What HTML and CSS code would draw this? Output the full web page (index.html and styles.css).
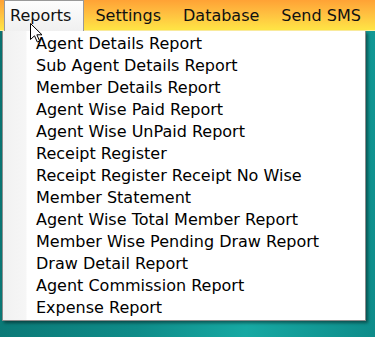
FILE: index.html
```html
<!DOCTYPE html>
<html lang="en">
<head>
  <meta charset="UTF-8">
  <title>Reports Menu</title>
  <meta name="viewport" content="width=device-width, initial-scale=1">
  <link rel="stylesheet" href="styles.css">
</head>
<body>
  <div class="menubar">
    <div class="menu-item open">Reports</div>
    <div class="menu-item">Settings</div>
    <div class="menu-item">Database</div>
    <div class="menu-item">Send SMS</div>
  </div>

  <ul class="dropdown">
    <li>Agent Details Report</li>
    <li>Sub Agent Details Report</li>
    <li>Member Details Report</li>
    <li>Agent Wise Paid Report</li>
    <li>Agent Wise UnPaid Report</li>
    <li>Receipt Register</li>
    <li>Receipt Register Receipt No Wise</li>
    <li>Member Statement</li>
    <li>Agent Wise Total Member Report</li>
    <li>Member Wise Pending Draw Report</li>
    <li>Draw Detail Report</li>
    <li>Agent Commission Report</li>
    <li>Expense Report</li>
  </ul>

  <svg class="cursor" width="13" height="20" viewBox="0 0 13 20">
    <path d="M0.5 0.5 L0.5 16.5 L4.5 12.8 L7.3 19 L9.6 18 L6.9 11.8 L12 11.8 Z" fill="#fff" stroke="#000" stroke-width="1" stroke-linejoin="round"/>
  </svg>
</body>
</html>
```

FILE: styles.css
```css
body {
  margin: 0;
  height: 337px;
  overflow: hidden;
  font-family: "DejaVu Sans", Verdana, sans-serif;
  font-size: 16px;
  color: #000;
  background: linear-gradient(100deg, #0a7270 0%, #0f8c89 45%, #17a9a3 70%, #0e8c8a 100%);
  position: relative;
}
.menubar {
  height: 30px;
  display: flex;
  align-items: flex-end;
  padding-left: 4px;
  background: linear-gradient(to bottom, #ffa235 0%, #ffbf40 45%, #ffe545 100%);
  border-bottom: 1px solid #fff0a0;
}
.menu-item {
  height: 29px;
  line-height: 30px;
  padding: 0 11px;
  color: #111;
}
.menu-item.open {
  background: linear-gradient(to bottom, #fdfdfd, #f0f0f0);
  border: 1px solid #999;
  border-bottom: none;
  padding: 0 12px 0 5px;
  height: 30px;
  margin-bottom: -1px;
}
.dropdown {
  list-style: none;
  margin: 0 0 0 2px;
  padding: 2px 0 1px 0;
  width: 362px;
  border: 1px solid #8c8c8c;
  border-top: none;
  background: linear-gradient(to right, #f1f1f1 0, #f6f6f6 23px, #fff 24px);
  box-shadow: 2px 2px 3px rgba(0, 0, 0, 0.45);
}
.dropdown li {
  height: 22px;
  line-height: 22px;
  padding-left: 33px;
}
.cursor {
  position: absolute;
  left: 30px;
  top: 23px;
}
```
